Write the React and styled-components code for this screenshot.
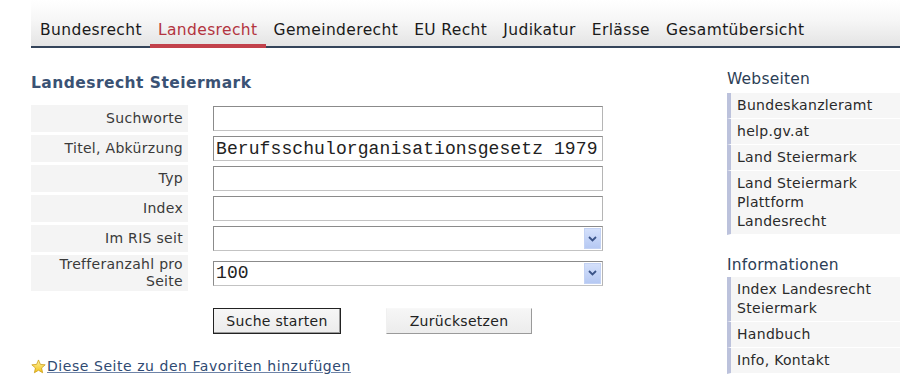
import styled, { createGlobalStyle } from "styled-components";

const GlobalStyle = createGlobalStyle`
  html, body {
    margin: 0;
    padding: 0;
    background: #fff;
    overflow: hidden;
  }
  body {
    font-family: "DejaVu Sans", Verdana, sans-serif;
    color: #333;
  }
`;

const Page = styled.div`
  width: 900px;
  height: 386px;
  overflow: hidden;
  padding-left: 31px;
  box-sizing: border-box;
`;

const NavBar = styled.nav`
  display: flex;
  height: 46px;
  align-items: flex-end;
  background: linear-gradient(#ffffff 0%, #f6f6f6 45%, #e4e4e4 100%);
  border-bottom: 2px solid #34445a;
  padding-left: 1px;
`;

const NavItem = styled.a`
  position: relative;
  display: block;
  padding: 0 8px 6px;
  font-size: 15.5px;
  letter-spacing: 0.38px;
  line-height: 20px;
  color: ${(p) => (p.$active ? "#b3343f" : "#1a1a1a")};
  text-decoration: none;
  white-space: nowrap;

  &::after {
    content: "";
    display: ${(p) => (p.$active ? "block" : "none")};
    position: absolute;
    left: 0;
    right: 0;
    bottom: -2px;
    height: 4px;
    background: #c2414b;
  }
`;

const Body = styled.div`
  display: flex;
  margin-top: 25px;
`;

const Main = styled.div`
  width: 572px;
  flex-shrink: 0;
`;

const Title = styled.h1`
  margin: 0 0 12px;
  font-size: 15.5px;
  letter-spacing: 0.45px;
  line-height: 20px;
  font-weight: bold;
  color: #3a5274;
`;

const Form = styled.div`
  display: flex;
  flex-direction: column;
  gap: 3px;
`;

const Row = styled.div`
  display: flex;
  align-items: center;
  gap: 25px;
`;

const Label = styled.div`
  width: 157px;
  min-height: 27px;
  box-sizing: border-box;
  display: flex;
  align-items: center;
  justify-content: flex-end;
  text-align: right;
  padding: 0 5px 0 10px;
  background: #f4f4f4;
  font-size: 14px;
  letter-spacing: 0.3px;
  line-height: 17px;
  color: #3a3a3a;
  ${(p) => p.$tall && "min-height: 36px;"}
`;

const Field = styled.div`
  width: 390px;
  height: 25px;
  box-sizing: border-box;
  display: flex;
  align-items: center;
  border: 1px solid #8b8b8b;
  border-bottom-color: #c3c3c3;
  border-right-color: #b5b5b5;
  background: #fff;
  font-family: "Liberation Mono", "Courier New", monospace;
  font-size: 18px;
  letter-spacing: 0.1px;
  color: #222;
  padding-left: 2px;
  white-space: nowrap;
  overflow: hidden;
`;

const FieldText = styled.span`
  flex: 1;
`;

const DropButton = styled.span`
  width: 17px;
  height: 21px;
  margin-right: 1px;
  display: flex;
  align-items: center;
  justify-content: center;
  background: linear-gradient(#d4e0fb, #b6c9f3);
  border: 1px solid #c3d2f4;
  box-sizing: border-box;
`;

const Buttons = styled.div`
  display: flex;
  gap: 45px;
  margin: 17px 0 0 182px;
`;

const Button = styled.button`
  height: 26px;
  padding: 0;
  width: ${(p) => p.$w}px;
  font-family: "DejaVu Sans", Verdana, sans-serif;
  font-size: 14px;
  letter-spacing: 0.3px;
  color: #222;
  background: linear-gradient(#f6f6f6, #ececec);
  border: 1px solid;
  border-color: ${(p) =>
    p.$primary ? "#222" : "#f8f8f8 #9a9a9a #9a9a9a #f0f0f0"};
  box-shadow: ${(p) => (p.$primary ? "inset -1px -1px 0 #9a9a9a" : "none")};
`;

const FavLink = styled.a`
  display: flex;
  align-items: center;
  gap: 1px;
  margin-top: 24px;
  font-size: 14px;
  letter-spacing: 0.55px;
  color: #2f4a72;
  text-decoration: underline;
  text-decoration-color: #6f84a8;
`;

const Sidebar = styled.aside`
  margin-left: 124px;
  width: 200px;
  flex-shrink: 0;
  margin-top: -4px;
`;

const SideHeading = styled.h2`
  margin: 0 0 ${(p) => (p.$spaced ? 2 : 4)}px;
  font-size: 15.5px;
  letter-spacing: 0.2px;
  line-height: 20px;
  font-weight: normal;
  color: #2c3e56;
  ${(p) => p.$spaced && "margin-top: 20px;"}
`;

const SideList = styled.ul`
  list-style: none;
  margin: 0;
  padding: 0;
`;

const SideItem = styled.li`
  border-left: 4px solid #bcc2dc;
  border-bottom: 1px solid #fff;
  background: #f6f6f6;
  padding: 3px 0 3px 6px;
  font-size: 14px;
  letter-spacing: 0.3px;
  line-height: 19px;
  color: #2a2a2a;
`;

const Chevron = () => (
  <svg width="9" height="6" viewBox="0 0 9 6">
    <path d="M1 1 L4.5 4.5 L8 1" fill="none" stroke="#3b5488" strokeWidth="1.8" />
  </svg>
);

const Star = () => (
  <svg width="15" height="15" viewBox="0 0 24 24">
    <defs>
      <linearGradient id="star" x1="0" y1="0" x2="0" y2="1">
        <stop offset="0" stopColor="#fff3a0" />
        <stop offset="1" stopColor="#f2c21b" />
      </linearGradient>
    </defs>
    <path
      d="M12 1.5 L15 8.6 L22.7 9.3 L16.9 14.4 L18.6 22 L12 18 L5.4 22 L7.1 14.4 L1.3 9.3 L9 8.6 Z"
      fill="url(#star)"
      stroke="#c99a10"
      strokeWidth="1.2"
    />
  </svg>
);

const navItems = [
  "Bundesrecht",
  "Landesrecht",
  "Gemeinderecht",
  "EU Recht",
  "Judikatur",
  "Erlässe",
  "Gesamtübersicht",
];

const fields = [
  { label: "Suchworte" },
  { label: "Titel, Abkürzung", value: "Berufsschulorganisationsgesetz 1979" },
  { label: "Typ" },
  { label: "Index" },
  { label: "Im RIS seit", select: true },
  { label: "Trefferanzahl pro Seite", value: "100", select: true, tall: true },
];

export default function App() {
  return (
    <Page>
      <GlobalStyle />
      <NavBar>
        {navItems.map((item) => (
          <NavItem key={item} $active={item === "Landesrecht"}>
            {item}
          </NavItem>
        ))}
      </NavBar>
      <Body>
        <Main>
          <Title>Landesrecht Steiermark</Title>
          <Form>
            {fields.map((f) => (
              <Row key={f.label}>
                <Label $tall={f.tall}>{f.label}</Label>
                <Field>
                  <FieldText>{f.value}</FieldText>
                  {f.select && (
                    <DropButton>
                      <Chevron />
                    </DropButton>
                  )}
                </Field>
              </Row>
            ))}
          </Form>
          <Buttons>
            <Button $primary $w={128}>
              Suche starten
            </Button>
            <Button $w={146}>Zurücksetzen</Button>
          </Buttons>
          <FavLink>
            <Star />
            Diese Seite zu den Favoriten hinzufügen
          </FavLink>
        </Main>
        <Sidebar>
          <SideHeading>Webseiten</SideHeading>
          <SideList>
            <SideItem>Bundeskanzleramt</SideItem>
            <SideItem>help.gv.at</SideItem>
            <SideItem>Land Steiermark</SideItem>
            <SideItem>
              Land Steiermark
              <br />
              Plattform
              <br />
              Landesrecht
            </SideItem>
          </SideList>
          <SideHeading $spaced>Informationen</SideHeading>
          <SideList>
            <SideItem>
              Index Landesrecht
              <br />
              Steiermark
            </SideItem>
            <SideItem>Handbuch</SideItem>
            <SideItem>Info, Kontakt</SideItem>
          </SideList>
        </Sidebar>
      </Body>
    </Page>
  );
}
